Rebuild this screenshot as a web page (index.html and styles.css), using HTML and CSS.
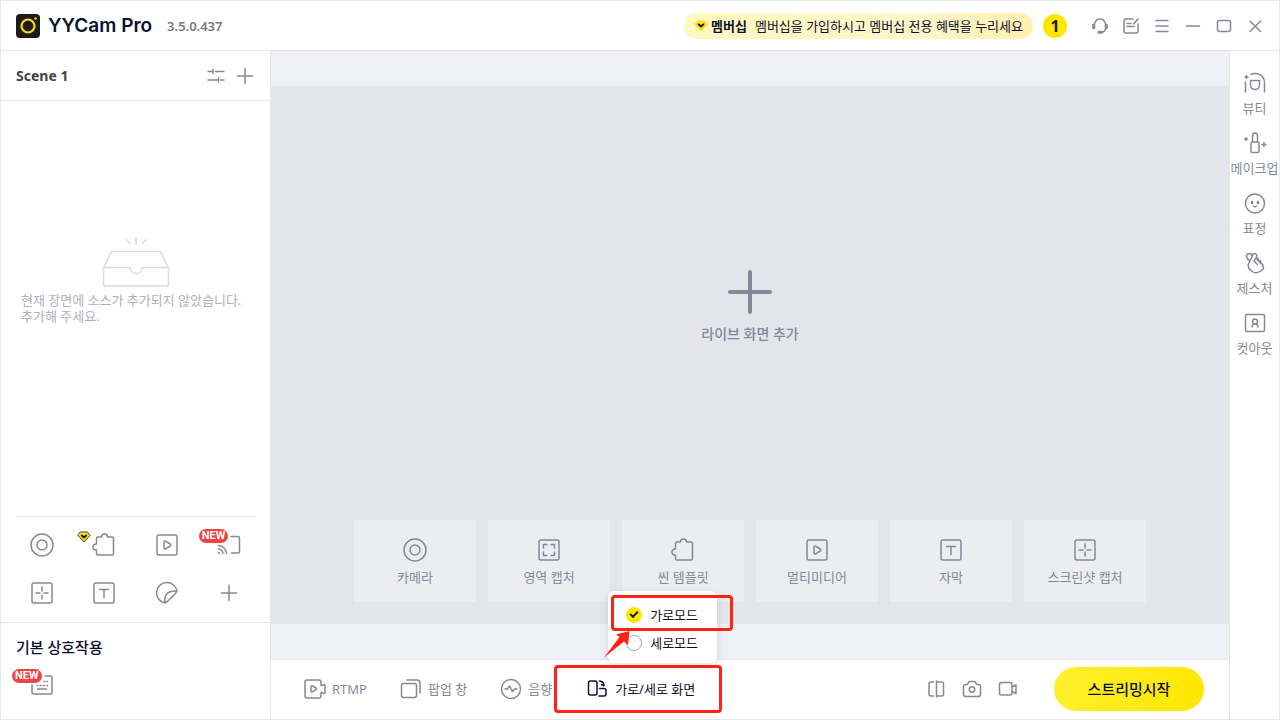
FILE: index.html
```html
<!DOCTYPE html>
<html lang="ko">
<head>
    <meta charset="UTF-8">
    <meta name="viewport" content="width=device-width, initial-scale=1.0">
    <title>YYCam Pro</title>
    <link rel="stylesheet" href="styles.css">
</head>
<body>
    <!-- Shared icons -->
    <svg class="sprite" aria-hidden="true">
        <symbol id="i-camera" viewBox="0 0 24 24"><circle cx="12" cy="12" r="11"/><circle cx="12" cy="12" r="5"/></symbol>
        <symbol id="i-puzzle" viewBox="0 0 24 24"><path d="M4.500 5.500a1.500 1.500 0 0 1 1.500-1.500h3.500c0-1 .2-3 3-3s3 2 3 3h4.500a1.500 1.500 0 0 1 1.500 1.500v15a1.500 1.500 0 0 1-1.500 1.500H6a1.500 1.500 0 0 1-1.500-1.500v-3.500c-2.200.2-3.500-.8-3.500-3s1.300-3 3.500-3z"/></symbol>
        <symbol id="i-media" viewBox="0 0 24 24"><rect x="2" y="2" width="20" height="20" rx="2"/><path d="M9 9.200c0-1 .8-1.500 1.600-1l4.600 2.800c.8.500.8 1.500 0 2l-4.600 2.800c-.8.500-1.600 0-1.600-1z"/></symbol>
        <symbol id="i-shot" viewBox="0 0 24 24"><rect x="2" y="2" width="20" height="20" rx="2"/><path d="M12 6v4M12 14v4M6 12h4M14 12h4"/></symbol>
        <symbol id="i-text" viewBox="0 0 24 24"><rect x="2" y="2" width="20" height="20" rx="2"/><path d="M7.500 8.500h9M12 8.500V16.500"/></symbol>
        <symbol id="i-area" viewBox="0 0 24 24"><rect x="2" y="2" width="20" height="20" rx="2"/><path d="M6.500 10V6.500H10M14 6.500h3.500V10M17.500 14v3.500H14M10 17.500H6.500V14"/></symbol>
        <symbol id="i-plus" viewBox="0 0 24 24"><path d="M12 4.500v15M4.500 12h15"/></symbol>
    </svg>

    <header class="topbar">
        <svg class="logo" viewBox="0 0 24 24" aria-hidden="true">
            <rect width="24" height="24" rx="4" fill="#1c1c1c"/>
            <circle cx="12" cy="12" r="6.500" fill="none" stroke="#ffd800" stroke-width="2.200"/>
            <circle cx="19.500" cy="4.500" r="1.200" fill="#ffe600"/>
        </svg>
        <h1>YYCam Pro</h1>
        <span class="version">3.5.0.437</span>
        <a href="#" class="member">
            <svg class="gem-icon" viewBox="0 0 14 12" aria-hidden="true"><path fill="#ffd91a" d="M3.500.500h7L13.700 4.500 7 11.500.3 4.500z"/><path fill="none" stroke="#1c1c1c" stroke-width="2" d="M4.800 4.500 7 6.500l2.200-2"/></svg>
            <strong>멤버십</strong>
            <span>멤버십을 가입하시고 멤버십 전용 혜택을 누리세요</span>
        </a>
        <button class="avatar" type="button">1</button>
        <nav class="window-tools">
            <button type="button" aria-label="고객센터"><svg viewBox="0 0 18 18"><path d="M3.500 11V7.500a5.500 5.500 0 0 1 11 0V11c0 2.500-1.500 4-4 4"/><path d="M2.500 8v3M15.500 8v3" stroke-width="2.600"/><path d="M8 15.200h2.600" stroke-width="3"/></svg></button>
            <button type="button" aria-label="피드백"><svg viewBox="0 0 18 18"><path d="M11 2H4a2 2 0 0 0-2 2v10a2 2 0 0 0 2 2h10a2 2 0 0 0 2-2V7M16 2l-4.500 5M5 6.500h4M5 9.500h7"/></svg></button>
            <button type="button" aria-label="메뉴"><svg viewBox="0 0 18 18"><path d="M3 3.500h12M3 9h12M3 14.500h12"/></svg></button>
            <button type="button" aria-label="최소화"><svg viewBox="0 0 18 18"><path d="M2.500 9h13"/></svg></button>
            <button type="button" aria-label="최대화"><svg viewBox="0 0 18 18"><rect x="2.500" y="3.500" width="13" height="11" rx="2"/></svg></button>
            <button type="button" aria-label="닫기"><svg viewBox="0 0 18 18"><path d="M4 4l10.500 10.500M14.500 4L4 14.500"/></svg></button>
        </nav>
    </header>

    <div class="workspace">
        <aside class="sources">
            <div class="scene-head">
                <h2>Scene 1</h2>
                <button type="button" aria-label="장면 설정"><svg viewBox="0 0 24 24"><path d="M4 7.500h4.500M9 5.500v4M11.500 7.500H20M4 16h10.500M14.500 14v4M16.500 16H20"/></svg></button>
                <button type="button" aria-label="장면 추가"><svg><use href="#i-plus"/></svg></button>
            </div>
            <div class="empty">
                <svg viewBox="0 0 68 50" aria-hidden="true"><path d="M1.500 31 9.500 14.500h49L66.500 31v16a2 2 0 0 1-2 2h-61a2 2 0 0 1-2-2zM1.500 30.500H28c.5 8 12 8 12.500 0h26M24 2.500l4.500 4M34 1v6M44.500 2.500l-4.500 4"/></svg>
                <p>현재 장면에 소스가 추가되지 않았습니다. 추가해 주세요.</p>
            </div>
            <hr>
            <div class="source-tools">
                <button type="button" aria-label="카메라"><svg><use href="#i-camera"/></svg></button>
                <button type="button" aria-label="씬 템플릿"><svg><use href="#i-puzzle"/></svg><svg class="gem-badge" viewBox="0 0 14 12"><path fill="#ffe01a" stroke="#444" stroke-width="1" d="M3.500 1h7L13 4.500 7 11 1 4.500z"/><path stroke="#1c1c1c" stroke-width="2" d="M4.800 4.500 7 6.500l2.200-2"/></svg></button>
                <button type="button" aria-label="멀티미디어"><svg><use href="#i-media"/></svg></button>
                <button type="button" aria-label="화면 미러링"><svg viewBox="0 0 24 24"><path d="M14 3.500h7A1.500 1.500 0 0 1 22.500 5v13.500A1.500 1.500 0 0 1 21 20h-6.500M1.500 12.500a8.500 8.500 0 0 1 8 8M1.500 16a5 5 0 0 1 4.500 4.500M1.500 19.500l1 1"/></svg><span class="new">NEW</span></button>
                <button type="button" aria-label="스크린샷 캡처"><svg><use href="#i-shot"/></svg></button>
                <button type="button" aria-label="자막"><svg><use href="#i-text"/></svg></button>
                <button type="button" aria-label="스티커"><svg viewBox="0 0 24 24"><path d="M10 22A10.300 10.300 0 1 1 22 10c-.5 2-10 11.500-12 12zM10 22c-1-8 2-12.500 12-12"/></svg></button>
                <button type="button" aria-label="더보기"><svg><use href="#i-plus"/></svg></button>
            </div>
            <section class="interaction">
                <h2>기본 상호작용</h2>
                <button type="button" aria-label="자막 보드"><svg viewBox="0 0 24 24"><path d="M15 3h5.500A1.500 1.500 0 0 1 22 4.500v15a1.500 1.500 0 0 1-1.500 1.500h-17A1.500 1.500 0 0 1 2 19.500V12M7.500 16h9M14 8.500h1M17 8.500h.5M7 12.500h.5M10 12.500h1M13.500 12.500h1M17 12.500h.5"/></svg><span class="new">NEW</span></button>
            </section>
        </aside>

        <main>
            <div class="stage">
                <button class="add-live" type="button">
                    <svg viewBox="0 0 44 44" aria-hidden="true"><path d="M22 2v40M2 22h40"/></svg>
                    라이브 화면 추가
                </button>
                <div class="tiles">
                    <button type="button"><svg><use href="#i-camera"/></svg>카메라</button>
                    <button type="button"><svg><use href="#i-area"/></svg>영역 캡처</button>
                    <button type="button"><svg><use href="#i-puzzle"/></svg>씬 템플릿</button>
                    <button type="button"><svg><use href="#i-media"/></svg>멀티미디어</button>
                    <button type="button"><svg><use href="#i-text"/></svg>자막</button>
                    <button type="button"><svg><use href="#i-shot"/></svg>스크린샷 캡처</button>
                </div>
            </div>
            <div class="bottombar">
                <button type="button"><svg viewBox="0 0 22 22"><path d="M17 7V4a2 2 0 0 0-2-2H3a2 2 0 0 0-2 2v14a2 2 0 0 0 2 2h12a2 2 0 0 0 2-2v-3c0-1 1-.8 2 0s2 .5 2-.5v-7c0-1-1-1.300-2-.5s-2 1-2 0zM7 8.800c0-1 .7-1.400 1.500-1l3.500 2.200c.8.500.8 1.200 0 1.700l-3.500 2.200c-.8.400-1.500 0-1.500-1z"/></svg>RTMP</button>
                <button type="button"><svg viewBox="0 0 22 22"><rect x="1.500" y="5.500" width="15" height="14" rx="2"/><path d="M7 2h10a3 3 0 0 1 3 3v10"/></svg>팝업 창</button>
                <button type="button"><svg viewBox="0 0 22 22"><circle cx="11" cy="11" r="9.500"/><path d="M5 11h2.500L9.500 8l3 5.500 2-2.500H17"/></svg>음향</button>
                <div class="orientation">
                    <button type="button"><svg viewBox="0 0 22 22"><rect x="1.500" y="3" width="8.500" height="14" rx="2"/><path d="M12.500 10.500H17a2 2 0 0 1 2 2V16a2 2 0 0 1-2 2h-5M12.500 3c2.800.3 4.500 1.800 4.500 4.500M14.500 6.500l2.500 1.200"/></svg>가로/세로 화면</button>
                    <form class="mode-menu">
                        <label class="marked"><input type="radio" name="mode" checked>가로모드</label>
                        <label><input type="radio" name="mode">세로모드</label>
                        <svg class="arrow" viewBox="0 0 26 27" aria-hidden="true"><path d="M0 26.500 15.500 6 12 3.500 25.500 0 24 14l-4-3.500z"/></svg>
                    </form>
                </div>
                <div class="record-tools">
                    <button type="button" aria-label="좌우 반전"><svg viewBox="0 0 20 20"><path d="M7.500 3H5a2 2 0 0 0-2 2v10a2 2 0 0 0 2 2h2.500M10.500 2v16M10.500 3H16a1.500 1.500 0 0 1 1.500 1.500v11A1.500 1.500 0 0 1 16 17h-5.500"/></svg></button>
                    <button type="button" aria-label="사진"><svg viewBox="0 0 20 20"><path d="M3.500 5.500h2l1.500-3h6l1.500 3h2a2 2 0 0 1 2 2v8a2 2 0 0 1-2 2h-13a2 2 0 0 1-2-2v-8a2 2 0 0 1 2-2z"/><circle cx="10" cy="10.500" r="2.700"/></svg></button>
                    <button type="button" aria-label="녹화"><svg viewBox="0 0 20 20"><rect x="1.500" y="3.500" width="12.500" height="12.500" rx="2"/><path d="M14 8l4-2v8.500l-4-2"/></svg></button>
                </div>
                <button class="start" type="button">스트리밍시작</button>
            </div>
        </main>

        <aside class="effects">
            <button type="button"><svg viewBox="0 0 24 24"><path d="M8 3.200c7-2 13.500 1 13.500 9V21M2.500 11V21M3.500 4.500v3M2 6h3M7.500 9.500h9V14a4.500 4.500 0 0 1-9 0z"/></svg>뷰티</button>
            <button type="button"><svg viewBox="0 0 24 24"><rect x="8" y="11" width="8" height="10.500" rx="1.500"/><path d="M9.500 11V5.500c0-2 1-3.500 2.500-3.500s2.500 1.500 2.500 3.500V11M3 6.500v3M1.500 8h3M21 11.500v4M19 13.500h4"/></svg>메이크업</button>
            <button type="button"><svg viewBox="0 0 24 24"><circle cx="12" cy="12.500" r="9.500"/><path d="M9 11v1M15 11v1" stroke-width="2.500"/><path d="M10.500 15l1.500 1 1.500-1"/></svg>표정</button>
            <button type="button"><svg viewBox="0 0 24 24"><path d="M6.500 9.500C3.500 8 2.500 4 5 2.800c2.500-1 4.500.7 4 3.200L5.500 13c-1.300 3 .5 5 3 7 3.500 2.800 7 1.800 10-.5 2.500-2 2.500-3 1-4.500M9 6c.5-2.500 2-4 3.700-3.200 1.500.8 1.300 2.500.3 4.200l-2 3M13 7c1.500-.8 3 .8 2 2.500M15.500 9.500c1.800-.5 2.800 1 1.800 2.500M17.500 12.500c2-.2 2.800 1.200 2 2.500M11 10l3.500 3.500M14 8.500l2.500 2.500"/></svg>제스처</button>
            <button type="button"><svg viewBox="0 0 24 24"><rect x="2.500" y="3.500" width="19" height="17" rx="1.500"/><circle cx="12" cy="10.500" r="2.500"/><path d="M9 16c.2-1.500.8-2.500 2-3M15 16c-.2-1.500-.8-2.500-2-3"/></svg>컷아웃</button>
        </aside>
    </div>
</body>
</html>
```
FILE: styles.css
```css
*,
*::after {
    box-sizing: border-box;
}
body {
    margin: 0;
    min-height: 100vh;
    display: flex;
    flex-direction: column;
    border: 1px solid #e6e6e6;
    background: #fff;
    color: #0c1030;
    font: 13px/16px "Noto Sans", "Noto Sans CJK KR", sans-serif;
}
h1, h2, p {
    margin: 0;
}
button {
    padding: 0;
    border: 0;
    background: none;
    color: #858899;
    font: inherit;
    cursor: pointer;
}
svg {
    display: block;
    flex: none;
    fill: none;
    stroke: currentColor;
    stroke-width: 1.5;
    stroke-linecap: round;
    stroke-linejoin: round;
}
.sprite {
    position: absolute;
    width: 0;
    height: 0;
}

/* Top bar */
.topbar {
    display: flex;
    align-items: center;
    height: 50px;
    padding: 0 9px 0 15px;
    border-bottom: 1px solid #e6e6e6;
}
.logo {
    width: 24px;
    height: 24px;
    stroke: none;
}
.topbar h1 {
    margin-left: 8px;
    font: 600 19px/24px Inter, sans-serif;
}
.version {
    margin-left: 15px;
    color: #77797d;
    font-size: 13px;
    font-weight: 600;
}
.member {
    display: flex;
    align-items: center;
    height: 26px;
    margin-left: auto;
    padding: 0 10px;
    border-radius: 13px;
    background: linear-gradient(90deg, #fff8c0, #fff6c8 70%, #fff0b0);
    color: #0c1030;
    text-decoration: none;
}
.member span {
    margin-left: 8px;
}
.gem-icon {
    width: 14px;
    height: 12px;
    margin-right: 3px;
    stroke: none;
}
.avatar {
    width: 24px;
    height: 24px;
    margin-left: 10px;
    border-radius: 50%;
    background: #ffe600;
    color: #222;
    font-size: 16px;
    font-weight: 700;
}
.window-tools {
    display: flex;
    margin-left: 17px;
}
.window-tools button {
    display: grid;
    place-items: center;
    width: 31px;
    height: 31px;
}
.window-tools svg {
    width: 18px;
    height: 18px;
}

.workspace {
    flex: 1;
    display: flex;
}

/* Left panel */
.sources {
    display: flex;
    flex-direction: column;
    width: 270px;
    border-right: 1px solid #e6e6e6;
}
.scene-head {
    display: flex;
    align-items: center;
    gap: 5px;
    height: 50px;
    padding: 0 13px 0 15px;
    border-bottom: 1px solid #e6e6e6;
}
.scene-head h2 {
    margin-right: auto;
    color: #444;
    font-size: 14px;
    font-weight: 700;
}
.scene-head svg,
.source-tools svg,
.interaction svg,
.tiles svg,
.effects svg {
    width: 24px;
    height: 24px;
}
.empty {
    flex: 1;
    display: flex;
    flex-direction: column;
    align-items: center;
    justify-content: center;
    gap: 5px;
    padding: 0 20px 56px;
    color: #acafbf;
}
.empty svg {
    width: 68px;
    height: 50px;
    color: #d9dae3;
}
.sources hr {
    width: 240px;
    height: 1px;
    margin: 0 auto;
    border: 0;
    background: #e6e6e6;
}
.source-tools {
    display: grid;
    grid-template-columns: repeat(4, 1fr);
    grid-auto-rows: 48px;
    padding: 4px 10px 5px;
}
.source-tools button {
    position: relative;
    display: grid;
    place-items: center;
}
.source-tools .gem-badge {
    position: absolute;
    left: 4px;
    top: 10px;
    width: 14px;
    height: 12px;
}
.new {
    position: absolute;
    left: 1px;
    top: 8px;
    padding: 0 3px;
    border-radius: 7px;
    background: #f04444;
    color: #fff;
    font: 700 11px/14px Roboto, sans-serif;
}
.interaction {
    height: 97px;
    padding: 15px;
    border-top: 1px solid #e6e6e6;
}
.interaction h2 {
    font-size: 15px;
    font-weight: 500;
    line-height: 18px;
}
.interaction button {
    position: relative;
    margin: 17px 0 0 14px;
}
.interaction .new {
    left: -18px;
    top: -4px;
}

/* Preview */
main {
    flex: 1;
    display: flex;
    flex-direction: column;
    min-width: 0;
    background: #eff0f5;
}
.stage {
    flex: 1;
    display: flex;
    flex-direction: column;
    align-items: center;
    margin: 35px 0;
    padding-bottom: 22px;
    background: #e4e5ea;
}
.add-live {
    flex: 1;
    display: flex;
    flex-direction: column;
    align-items: center;
    justify-content: center;
    gap: 12px;
    padding-top: 6px;
    font-size: 14px;
    font-weight: 500;
}
.add-live svg {
    width: 44px;
    height: 44px;
    stroke-width: 4;
}
.tiles {
    display: flex;
    gap: 12px;
}
.tiles button {
    display: flex;
    flex-direction: column;
    align-items: center;
    justify-content: center;
    gap: 7px;
    width: 122px;
    height: 82px;
    padding-top: 1px;
    background: #ecedf1;
}

/* Bottom bar */
.bottombar {
    display: flex;
    align-items: center;
    height: 60px;
    padding: 0 25px 2px 33px;
    border-top: 1px solid #e6e6e6;
    background: #fff;
}
.bottombar > button:not(.start) {
    display: flex;
    align-items: center;
    gap: 6px;
    margin-right: 33px;
}
.bottombar svg {
    width: 22px;
    height: 22px;
}
.orientation {
    position: relative;
    margin-left: -31px;
}
.orientation > button {
    display: flex;
    align-items: center;
    gap: 6px;
    height: 48px;
    padding: 0 24px 0 30px;
    border: 3px solid #ff2314;
    border-radius: 4px;
    color: #0c1030;
}
.mode-menu {
    position: absolute;
    left: 54px;
    bottom: 50px;
    width: 109px;
    padding: 10px 0 6px;
    border-radius: 6px;
    background: #fff;
    box-shadow: 0 2px 8px rgba(0, 0, 0, 0.12);
    color: #111;
}
.mode-menu label {
    position: relative;
    display: flex;
    align-items: center;
    gap: 8px;
    height: 28px;
    padding-left: 18px;
}
.mode-menu input {
    appearance: none;
    display: grid;
    place-items: center;
    width: 16px;
    height: 16px;
    margin: 0;
    border: 1px solid #a4a7b8;
    border-radius: 50%;
}
.mode-menu input:checked {
    border-color: #ffe600;
    background: #ffe600;
}
.mode-menu input:checked::after {
    content: "";
    width: 8px;
    height: 5px;
    border-left: 2px solid #1c1c1c;
    border-bottom: 2px solid #1c1c1c;
    transform: translateY(-1px) rotate(-45deg);
}
/* Red frame round the chosen mode */
.marked::after {
    content: "";
    position: absolute;
    left: 3px;
    top: -6px;
    width: 122px;
    height: 36px;
    border: 3px solid #ff2314;
    border-radius: 4px;
}
.mode-menu .arrow {
    position: absolute;
    left: -4px;
    top: 40px;
    width: 26px;
    height: 27px;
    fill: #ff2314;
    stroke: none;
}
.record-tools {
    display: flex;
    gap: 16px;
    margin: 0 36px 0 auto;
}
.record-tools svg {
    width: 20px;
    height: 20px;
}
.start {
    width: 150px;
    height: 44px;
    border-radius: 22px;
    background: linear-gradient(100deg, #fff02e, #ffe600);
    color: #0c1030;
    font-size: 15px;
    font-weight: 500;
}

/* Right panel */
.effects {
    display: flex;
    flex-direction: column;
    width: 50px;
    padding-top: 20px;
    border-left: 1px solid #e6e6e6;
}
.effects button {
    display: flex;
    flex-direction: column;
    align-items: center;
    gap: 5px;
    height: 60px;
    white-space: nowrap;
}
```
